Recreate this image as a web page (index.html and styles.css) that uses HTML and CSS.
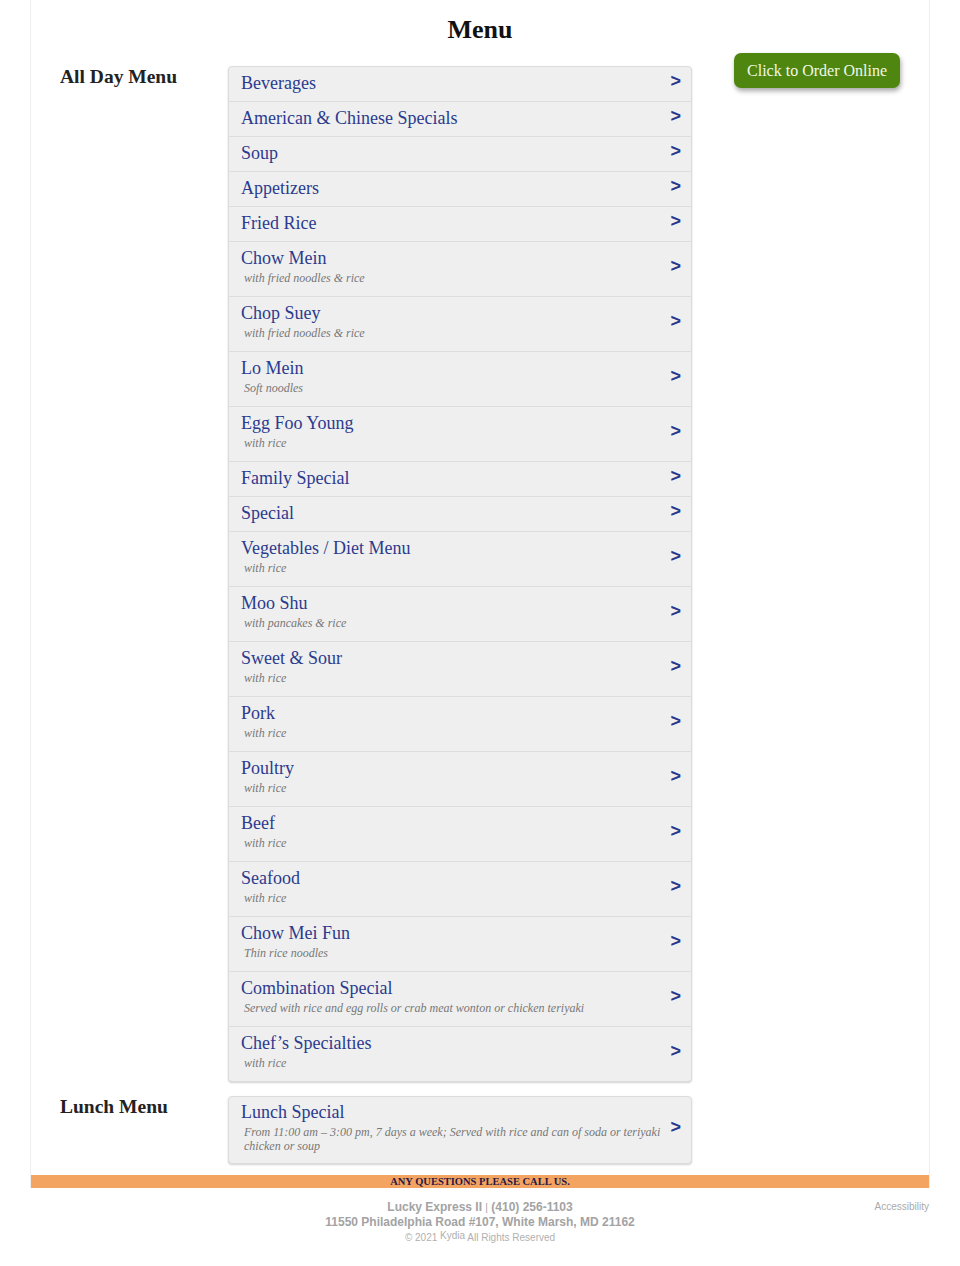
FILE: index.html
```html
<!DOCTYPE html>
<html lang="en">
<head>
<meta charset="utf-8">
<title>Menu</title>
<link rel="stylesheet" href="styles.css">
</head>
<body>
<div class="page">
  <h1 class="title">Menu</h1>
  <div class="main">
    <div class="sections">
      <section class="section">
        <h2 class="label">All Day Menu</h2>
        <div class="list">
          <a class="row"><div class="txt"><div class="name">Beverages</div></div><span class="chev">&gt;</span></a>
          <a class="row"><div class="txt"><div class="name">American &amp; Chinese Specials</div></div><span class="chev">&gt;</span></a>
          <a class="row"><div class="txt"><div class="name">Soup</div></div><span class="chev">&gt;</span></a>
          <a class="row"><div class="txt"><div class="name">Appetizers</div></div><span class="chev">&gt;</span></a>
          <a class="row"><div class="txt"><div class="name">Fried Rice</div></div><span class="chev">&gt;</span></a>
          <a class="row"><div class="txt"><div class="name">Chow Mein</div><div class="sub">with fried noodles &amp; rice</div></div><span class="chev">&gt;</span></a>
          <a class="row"><div class="txt"><div class="name">Chop Suey</div><div class="sub">with fried noodles &amp; rice</div></div><span class="chev">&gt;</span></a>
          <a class="row"><div class="txt"><div class="name">Lo Mein</div><div class="sub">Soft noodles</div></div><span class="chev">&gt;</span></a>
          <a class="row"><div class="txt"><div class="name">Egg Foo Young</div><div class="sub">with rice</div></div><span class="chev">&gt;</span></a>
          <a class="row"><div class="txt"><div class="name">Family Special</div></div><span class="chev">&gt;</span></a>
          <a class="row"><div class="txt"><div class="name">Special</div></div><span class="chev">&gt;</span></a>
          <a class="row"><div class="txt"><div class="name">Vegetables / Diet Menu</div><div class="sub">with rice</div></div><span class="chev">&gt;</span></a>
          <a class="row"><div class="txt"><div class="name">Moo Shu</div><div class="sub">with pancakes &amp; rice</div></div><span class="chev">&gt;</span></a>
          <a class="row"><div class="txt"><div class="name">Sweet &amp; Sour</div><div class="sub">with rice</div></div><span class="chev">&gt;</span></a>
          <a class="row"><div class="txt"><div class="name">Pork</div><div class="sub">with rice</div></div><span class="chev">&gt;</span></a>
          <a class="row"><div class="txt"><div class="name">Poultry</div><div class="sub">with rice</div></div><span class="chev">&gt;</span></a>
          <a class="row"><div class="txt"><div class="name">Beef</div><div class="sub">with rice</div></div><span class="chev">&gt;</span></a>
          <a class="row"><div class="txt"><div class="name">Seafood</div><div class="sub">with rice</div></div><span class="chev">&gt;</span></a>
          <a class="row"><div class="txt"><div class="name">Chow Mei Fun</div><div class="sub">Thin rice noodles</div></div><span class="chev">&gt;</span></a>
          <a class="row"><div class="txt"><div class="name">Combination Special</div><div class="sub">Served with rice and egg rolls or crab meat wonton or chicken teriyaki</div></div><span class="chev">&gt;</span></a>
          <a class="row"><div class="txt"><div class="name">Chef’s Specialties</div><div class="sub">with rice</div></div><span class="chev">&gt;</span></a>
        </div>
      </section>
      <section class="section">
        <h2 class="label">Lunch Menu</h2>
        <div class="list">
          <a class="row row-tight"><div class="txt"><div class="name">Lunch Special</div><div class="sub">From 11:00 am – 3:00 pm, 7 days a week; Served with rice and can of soda or teriyaki chicken or soup</div></div><span class="chev">&gt;</span></a>
        </div>
      </section>
    </div>
    <div class="side">
      <a class="order">Click to Order Online</a>
    </div>
  </div>
  <div class="callbar">ANY QUESTIONS PLEASE CALL US.</div>
</div>
<footer class="footer">
  <div class="spacer"></div>
  <div class="info">
    <div class="line1">Lucky Express II <span class="pipe">|</span> (410) 256-1103</div>
    <div class="line2">11550 Philadelphia Road #107, White Marsh, MD 21162</div>
    <div class="line3">© 2021 <sup class="kydia">Kydia</sup> All Rights Reserved</div>
  </div>
  <div class="access"><a>Accessibility</a></div>
</footer>
</body>
</html>
```

FILE: styles.css
```css
html, body {
  margin: 0;
  padding: 0;
  background: #fff;
}
body {
  font-family: "Liberation Serif", "Times New Roman", serif;
  color: #222;
}
.page {
  width: 900px;
  margin: 0 auto;
  border-left: 1px solid #eeeeee;
  border-right: 1px solid #eeeeee;
  box-sizing: border-box;
}
.title {
  margin: 0;
  padding-top: 15px;
  font-size: 26px;
  line-height: 30px;
  font-weight: bold;
  text-align: center;
  color: #111;
}
.main {
  display: flex;
  margin-top: 8px;
  padding: 0 29px 0 29px;
}
.sections {
  flex: 0 0 632px;
  padding-top: 13px;
  display: flex;
  flex-direction: column;
  gap: 14px;
}
.section {
  display: flex;
  align-items: flex-start;
}
.label {
  flex: 0 0 168px;
  margin: 0;
  font-size: 19.5px;
  line-height: 22px;
  font-weight: bold;
  color: #222;
}
.list {
  flex: 0 0 464px;
  box-sizing: border-box;
  border: 1px solid #dcdcdc;
  border-radius: 4px;
  background: #efefef;
  box-shadow: 0 1px 2px rgba(0,0,0,0.18);
  overflow: hidden;
}
.row {
  display: flex;
  align-items: center;
  padding: 6px 10px 7px 12px;
  border-top: 1px solid #dddddd;
  cursor: pointer;
}
.row:first-child {
  border-top: none;
}
.row-tight {
  padding-top: 5px;
  padding-bottom: 6px;
}
.txt {
  flex: 1;
  min-width: 0;
}
.name {
  font-size: 18px;
  line-height: 21px;
  color: #2b3b8e;
}
.sub {
  margin: 2px 0 4px 3px;
  font-style: italic;
  font-size: 12px;
  line-height: 14px;
  color: #777;
}
.chev {
  flex: 0 0 auto;
  margin-left: 8px;
  margin-bottom: 6px;
  font-family: "Liberation Sans", Arial, sans-serif;
  font-weight: bold;
  font-size: 18px;
  line-height: 14px;
  color: #28368c;
}
.side {
  flex: 1;
  display: flex;
  justify-content: flex-end;
  align-items: flex-start;
}
.order {
  display: block;
  padding: 0 13px;
  height: 35px;
  line-height: 35px;
  font-size: 16px;
  color: #f3f8e8;
  background: #4e860f;
  border-radius: 7px;
  box-shadow: 1px 3px 5px rgba(0,0,0,0.35);
  cursor: pointer;
}
.callbar {
  margin-top: 11px;
  height: 13px;
  line-height: 13px;
  background: #f4a461;
  text-align: center;
  font-size: 10.5px;
  font-weight: bold;
  color: #2a1848;
}
.footer {
  width: 900px;
  margin: 0 auto;
  padding-top: 12px;
  display: grid;
  grid-template-columns: 1fr auto 1fr;
  font-family: "Liberation Sans", Arial, sans-serif;
}
.info {
  text-align: center;
  color: #a3a3a3;
}
.line1, .line2 {
  font-size: 12px;
  line-height: 14px;
  font-weight: bold;
}
.pipe {
  font-weight: normal;
  font-size: 10px;
}
.line3 {
  margin-top: 3px;
  font-size: 10px;
  line-height: 12px;
  color: #b0b0b0;
}
.kydia {
  font-size: 10px;
  vertical-align: 2px;
  line-height: 0;
}
.access {
  justify-self: end;
  font-size: 10px;
  line-height: 14px;
  color: #aaa;
  padding-right: 1px;
}
```
